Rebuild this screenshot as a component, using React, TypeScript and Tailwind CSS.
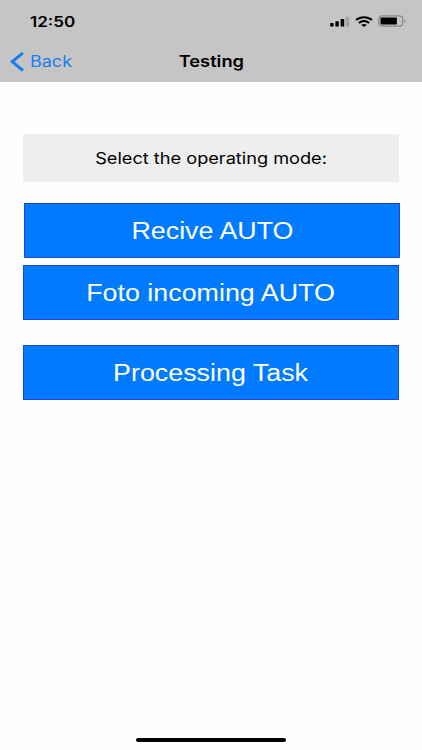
import clsx from "clsx";

const modes = [
  { label: "Recive AUTO", className: "ml-px -mr-px" },
  { label: "Foto incoming AUTO", className: "mt-[7px]" },
  { label: "Processing Task", className: "mt-[25px]" },
];

const StatusIcons = () => {
  return (
    <div className="flex items-center pb-px">
      <svg width="20" height="11" viewBox="0 0 20 11">
        <rect x="0.2" y="7" width="3.4" height="3.6" rx="0.7" />
        <rect x="5.4" y="5.2" width="3.4" height="5.4" rx="0.7" />
        <rect x="10.6" y="3" width="3.6" height="7.6" rx="0.7" />
        <rect x="15.8" y="0.8" width="3.4" height="9.8" rx="0.7" fill="#a3a2a3" />
      </svg>
      <svg className="ml-[5px]" width="18" height="11" viewBox="0 0 18 11" fill="none" stroke="#000" strokeWidth="2">
        <path d="M1 4.1C5.4 0.2 12.6 0.2 17 4.1" />
        <path d="M3.9 6.9C6.8 4.5 11.2 4.5 14.1 6.9" />
        <path d="M9 10.9L6.2 8.9C7.8 7.7 10.2 7.7 11.8 8.9Z" fill="#000" stroke="none" />
      </svg>
      <svg className="ml-[5px]" width="28" height="12" viewBox="0 0 28 12">
        <rect x="0.7" y="0.9" width="24" height="10.2" rx="2.8" fill="none" stroke="#777677" />
        <rect x="2.5" y="2.5" width="16.4" height="7" rx="0.9" />
        <path d="M26.2 4.4C27.6 5 27.6 7 26.2 7.6Z" fill="#777677" />
      </svg>
    </div>
  );
};

const App = () => {
  return (
    <div className="flex h-[750px] w-[422px] flex-col overflow-hidden bg-[#fefefe] font-['Inter','Liberation_Sans',sans-serif] text-black">
      <header className="h-[82px] bg-[#c6c5c6]">
        <div className="flex h-[43px] items-center justify-between pl-[30px] pr-4">
          <span className="origin-left scale-x-[1.22] text-[14px] font-semibold">12:50</span>
          <StatusIcons />
        </div>
        <div className="grid h-[37px] grid-cols-3 items-center">
          <button className="flex items-center pl-[10px] text-[#1b7bf2]">
            <svg width="14" height="20" viewBox="0 0 14 20" fill="none" stroke="currentColor" strokeWidth="3">
              <path d="M13 0.9L2.2 9.7L13 18.5" />
            </svg>
            <span className="ml-[5.5px] origin-left scale-x-[1.16] text-[15.5px]">Back</span>
          </button>
          <h1 className="scale-x-[1.18] text-center text-[15.5px] font-semibold">Testing</h1>
        </div>
      </header>

      <main className="flex grow flex-col px-[23px] pt-[52px]">
        <p className="flex h-12 items-center justify-center bg-[#eeeeee] text-base">
          <span className="scale-x-[1.135]">Select the operating mode:</span>
        </p>
        <div className="mt-[21px] flex flex-col">
          {modes.map((mode) => (
            <button
              key={mode.label}
              className={clsx(
                "flex h-[55px] items-center justify-center border border-[#1f45dc] bg-[#007aff] pt-px font-['Liberation_Sans',sans-serif] text-[23px] text-white",
                mode.className
              )}
            >
              <span className="scale-x-[1.167]">{mode.label}</span>
            </button>
          ))}
        </div>
      </main>

      <footer className="flex justify-center pb-2">
        <div className="h-1 w-[150px] rounded-full bg-black" />
      </footer>
    </div>
  );
};

export default App;
